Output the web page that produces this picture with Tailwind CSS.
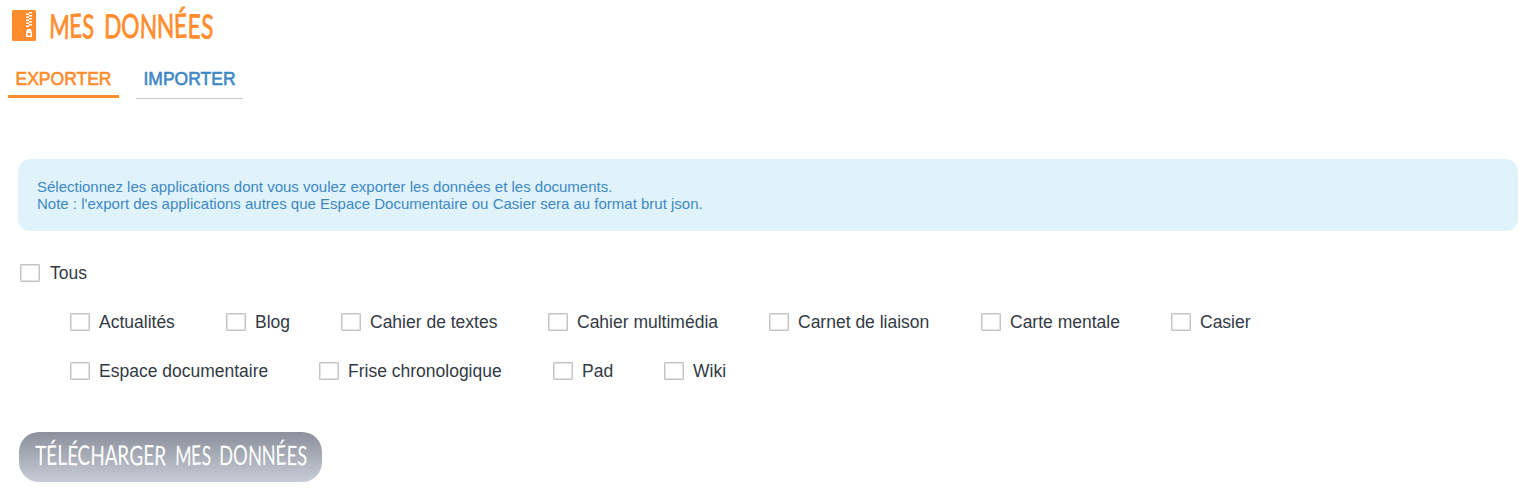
<!DOCTYPE html>
<html lang="fr">
<head>
<meta charset="utf-8">
<title>Mes données</title>
<script src="https://cdn.jsdelivr.net/npm/@tailwindcss/browser@4"></script>
</head>
<body class="bg-white font-['Liberation_Sans',Arial,sans-serif] text-[#333a45]">
<header class="flex h-[52px] pl-3 pt-[9px] text-[#ff8d2e]">
  <svg class="mt-px h-[31px] w-6" viewBox="0 0 24 31" fill="currentColor">
    <rect width="24" height="31" rx="1.500"/>
    <g fill="#fff">
      <path d="M17 2h3v1.500h-3zM14 3.500h3V5h-3zM17 5h3v1.500h-3zM14 6.500h3V8h-3zM17 8h3v1.500h-3zM14 9.500h3V11h-3zM17 11h3v1.500h-3zM14 12.500h3V14h-3zM17 14h3v1.500h-3zM14 15.500h3V17h-3z"/>
      <path fill-rule="evenodd" d="M15 19h4l1 4v4h-6v-4zM15.500 23v2.500h3v-2.500z"/>
    </g>
  </svg>
  <h1 class="ml-3">
    <svg class="h-[36px] w-[170px] overflow-visible" fill="currentColor" stroke="currentColor" stroke-width=".8" stroke-linejoin="round">
      <g class="font-['Lato',sans-serif] text-[33px]">
        <text x="1" y="29" textLength="45" lengthAdjust="spacingAndGlyphs" rotate="2 -2 2">MES</text>
        <text x="56" y="29" textLength="109" lengthAdjust="spacingAndGlyphs" rotate="1 0 2 -1 -2 1 3">DONNÉES</text>
      </g>
    </svg>
  </h1>
</header>
<nav class="flex items-start gap-[17px] pl-2 pt-3 text-[17.5px] leading-[30px]">
  <a class="h-[34px] w-[111px] border-b-3 border-[#ff8d2e] text-center text-[#ff8d2e] [-webkit-text-stroke:.6px]">EXPORTER</a>
  <a class="h-[35px] w-[107px] border-b border-[#c7cbd4] text-center text-[#3e88c5] [-webkit-text-stroke:.6px]">IMPORTER</a>
</nav>
<main class="px-[18px] pt-[60px]">
  <div class="mr-px h-[72px] rounded-[12px] bg-[#e0f3fb] pl-[19px] pt-[19px] text-[15px] leading-[17px] text-[#3e88c5]">
    Sélectionnez les applications dont vous voulez exporter les données et les documents.<br>
    Note : l'export des applications autres que Espace Documentaire ou Casier sera au format brut json.
  </div>
  <label class="mt-[31px] flex h-[22px] items-center gap-[10px] pl-0.5 text-[17.5px]"><i class="h-[18px] w-5 rounded-[1px] border border-[#c4c4c4] shadow-[inset_0_0_0_1px_#e2e2e2]"></i>Tous</label>
  <div class="mt-[27px] flex h-[22px] pl-[52px] text-[17.5px] leading-[22px]">
    <label class="flex w-[156px] items-center gap-[9px]"><i class="h-[18px] w-5 rounded-[1px] border border-[#c4c4c4] shadow-[inset_0_0_0_1px_#e2e2e2]"></i>Actualités</label>
    <label class="flex w-[115px] items-center gap-[9px]"><i class="h-[18px] w-5 rounded-[1px] border border-[#c4c4c4] shadow-[inset_0_0_0_1px_#e2e2e2]"></i>Blog</label>
    <label class="flex w-[207px] items-center gap-[9px]"><i class="h-[18px] w-5 rounded-[1px] border border-[#c4c4c4] shadow-[inset_0_0_0_1px_#e2e2e2]"></i>Cahier de textes</label>
    <label class="flex w-[221px] items-center gap-[9px]"><i class="h-[18px] w-5 rounded-[1px] border border-[#c4c4c4] shadow-[inset_0_0_0_1px_#e2e2e2]"></i>Cahier multimédia</label>
    <label class="flex w-[212px] items-center gap-[9px]"><i class="h-[18px] w-5 rounded-[1px] border border-[#c4c4c4] shadow-[inset_0_0_0_1px_#e2e2e2]"></i>Carnet de liaison</label>
    <label class="flex w-[190px] items-center gap-[9px]"><i class="h-[18px] w-5 rounded-[1px] border border-[#c4c4c4] shadow-[inset_0_0_0_1px_#e2e2e2]"></i>Carte mentale</label>
    <label class="flex items-center gap-[9px]"><i class="h-[18px] w-5 rounded-[1px] border border-[#c4c4c4] shadow-[inset_0_0_0_1px_#e2e2e2]"></i>Casier</label>
  </div>
  <div class="mt-[27px] flex h-[22px] pl-[52px] text-[17.5px] leading-[22px]">
    <label class="flex w-[249px] items-center gap-[9px]"><i class="h-[18px] w-5 rounded-[1px] border border-[#c4c4c4] shadow-[inset_0_0_0_1px_#e2e2e2]"></i>Espace documentaire</label>
    <label class="flex w-[234px] items-center gap-[9px]"><i class="h-[18px] w-5 rounded-[1px] border border-[#c4c4c4] shadow-[inset_0_0_0_1px_#e2e2e2]"></i>Frise chronologique</label>
    <label class="flex w-[111px] items-center gap-[9px]"><i class="h-[18px] w-5 rounded-[1px] border border-[#c4c4c4] shadow-[inset_0_0_0_1px_#e2e2e2]"></i>Pad</label>
    <label class="flex items-center gap-[9px]"><i class="h-[18px] w-5 rounded-[1px] border border-[#c4c4c4] shadow-[inset_0_0_0_1px_#e2e2e2]"></i>Wiki</label>
  </div>
  <button class="ml-px mt-[50px] block h-[50px] w-[303px] rounded-[20px] bg-linear-to-b from-[#8b909c] to-[#c8ccd5] text-white">
    <svg class="block h-[50px] w-[303px] overflow-visible" fill="currentColor">
      <g class="font-['Lato',sans-serif] text-[27px]">
        <text x="16" y="33" textLength="131" lengthAdjust="spacingAndGlyphs" rotate="1 -1 0 2 -1 1 0 -2 1 0 2">TÉLÉCHARGER</text>
        <text x="156" y="33" textLength="36" lengthAdjust="spacingAndGlyphs" rotate="2 -2 2">MES</text>
        <text x="200" y="33" textLength="88" lengthAdjust="spacingAndGlyphs" rotate="1 0 2 -1 -2 1 3">DONNÉES</text>
      </g>
    </svg>
  </button>
</main>
</body>
</html>
